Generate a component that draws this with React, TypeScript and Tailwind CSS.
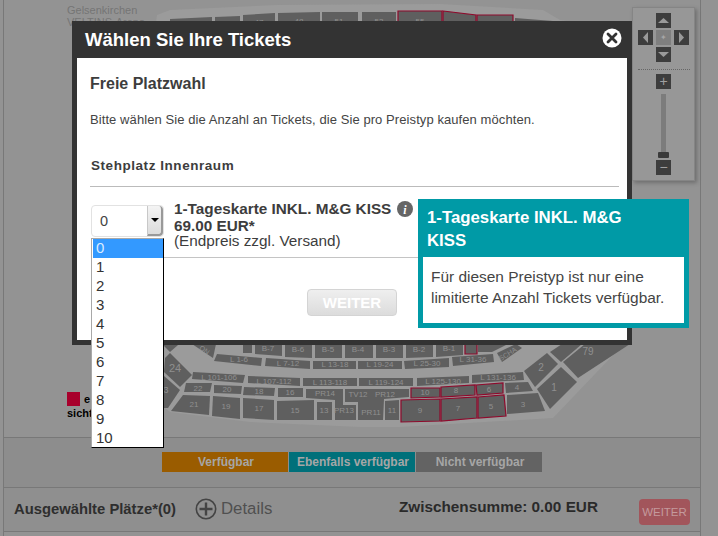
import React from 'react';

type Block = { pts: string; label?: string; x?: number; y?: number; size?: number; rot?: number };

const blocks: Block[] = [
  // top row, cut off by the modal
  { pts: '170,19 212,17 212,30 170,30' },
  { pts: '215,17 240,16 240,30 215,30' },
  { pts: '243,15 275,13 275,30 243,30', label: '47', x: 259, y: 25 },
  { pts: '278,13 320,12 320,30 278,30', label: '48', x: 299, y: 24 },
  { pts: '322,12 358,12 358,30 322,30', label: '51', x: 339, y: 24 },
  { pts: '362,12 396,12 396,30 362,30', label: '53', x: 379, y: 24 },
  { pts: '515,18 553,21 556,30 515,30' },
  // upper rows under the modal
  { pts: '163,345 178,345 170,352' },
  { pts: '192,344 216,344 213,358', label: 'ON', x: 203, y: 352, size: 7, rot: 35 },
  { pts: '243,344 252,344 252,353 243,353' },
  { pts: '255,344 282,344 282,356 255,354', label: 'B-7', x: 268, y: 351 },
  { pts: '285,344 312,344 312,358 285,357', label: 'B-6', x: 298, y: 352 },
  { pts: '315,344 342,344 342,358 315,358', label: 'B-5', x: 328, y: 352 },
  { pts: '345,344 373,344 373,358 345,358', label: 'B-4', x: 358, y: 352 },
  { pts: '376,344 403,344 403,358 376,358', label: 'B-3', x: 389, y: 352 },
  { pts: '406,344 433,344 433,357 406,358', label: 'B-2', x: 419, y: 352 },
  { pts: '436,344 463,344 463,355 436,357', label: 'B-1', x: 449, y: 351 },
  { pts: '478,344 508,344 492,352 478,352' },
  // L rows
  { pts: '217,354 262,358 261,366 214,361', label: 'L 1-6', x: 239, y: 362 },
  { pts: '266,358 310,361 310,369 265,366', label: 'L 7-12', x: 288, y: 366 },
  { pts: '313,361 356,361 356,369 313,369', label: 'L 13-18', x: 335, y: 367 },
  { pts: '358,361 402,361 402,369 358,369', label: 'L 19-24', x: 380, y: 367 },
  { pts: '404,361 449,358 449,367 405,369', label: 'L 25-30', x: 427, y: 366 },
  { pts: '452,357 493,354 494,362 453,366', label: 'L 31-36', x: 473, y: 362 },
  { pts: '497,353 516,344 522,348 502,362', label: 'SCHA', x: 509, y: 356, size: 7, rot: -32 },
  { pts: '193,372 245,375 243,383 192,379', label: 'L 101-106', x: 219, y: 380 },
  { pts: '248,376 300,378 300,386 248,383', label: 'L 107-112', x: 274, y: 384 },
  { pts: '303,378 357,378 357,386 303,386', label: 'L 113-118', x: 330, y: 385 },
  { pts: '359,378 413,378 413,386 359,386', label: 'L 119-124', x: 386, y: 385 },
  { pts: '417,378 469,376 469,383 417,386', label: 'L 125-130', x: 443, y: 384 },
  { pts: '472,375 523,372 524,380 472,383', label: 'L 131-136', x: 498, y: 380 },
  // numbered blocks
  { pts: '165,358 170,353 192,375 180,387 164,372', label: '24', x: 175, y: 372, size: 11 },
  { pts: '164,376 180,390 168,408 164,408', label: '3', x: 166, y: 393, size: 9 },
  { pts: '186,383 212,383 210,392 184,392', label: '22', x: 198, y: 391 },
  { pts: '214,385 242,386 241,394 214,393', label: '20', x: 227, y: 392 },
  { pts: '244,387 275,388 274,396 243,395', label: '18', x: 259, y: 394 },
  { pts: '278,388 303,388 303,397 278,397', label: '16', x: 290, y: 395 },
  { pts: '183,395 210,396 209,415 171,411', label: '21', x: 194, y: 407 },
  { pts: '213,396 240,398 240,419 212,416', label: '19', x: 226, y: 409 },
  { pts: '243,398 274,400 274,420 243,418', label: '17', x: 259, y: 411 },
  { pts: '277,401 314,400 314,420 277,420', label: '15', x: 295, y: 413 },
  { pts: '317,402 332,402 332,420 317,420', label: '13', x: 324, y: 413 },
  { pts: '306,389 343,389 343,405 356,405 356,420 335,420 335,400 306,398', label: 'PR14', x: 325, y: 396 },
  { pts: '345,389 409,389 409,397 384,399 383,420 358,420 358,402 345,402', label: 'TV12', x: 358, y: 397 },
  { pts: '385,401 399,400 399,420 385,420', label: '11', x: 392, y: 413 },
  { pts: '507,395 538,393 545,411 507,414', label: '3', x: 523, y: 407 },
  { pts: '505,383 528,382 533,391 506,393', label: '4', x: 517, y: 390 },
  { pts: '524,371 547,353 558,364 535,387', label: '2', x: 541, y: 371, size: 10 },
  { pts: '537,389 561,367 577,382 550,409', label: '1', x: 554, y: 391, size: 10 },
  { pts: '563,362 585,344 630,344 578,378', label: '79', x: 588, y: 355, size: 10 },
  { pts: '550,352 562,344 582,344 561,362' },
];

const redBlocks: Block[] = [
  { pts: '398,11 442,11 442,30 398,30', label: '55', x: 420, y: 24 },
  { pts: '443,11 476,15 476,30 443,30' },
  { pts: '477,15 513,15 513,30 477,30' },
  { pts: '465,340 477,340 477,354 465,354' },
  { pts: '411,388 440,388 440,397 411,398', label: '10', x: 425, y: 395 },
  { pts: '441,387 475,385 475,395 441,397', label: '8', x: 456, y: 393 },
  { pts: '476,385 503,383 503,393 477,395', label: '6', x: 489, y: 392 },
  { pts: '401,400 440,399 440,421 401,422', label: '9', x: 420, y: 413 },
  { pts: '441,399 477,397 477,418 441,421', label: '7', x: 458, y: 411 },
  { pts: '478,397 504,395 506,416 478,418', label: '5', x: 491, y: 409 },
];

const BlockShape: React.FC<{ block: Block; red?: boolean }> = ({ block, red }) => (
  <g>
    <polygon points={block.pts} fill="#5f5f5f" stroke={red ? '#8e0a2c' : 'none'} strokeWidth={red ? 1.2 : 0} />
    {block.label && (
      <text
        x={block.x}
        y={block.y}
        fontSize={block.size ?? 8}
        fill="#8f8f8f"
        textAnchor="middle"
        fontFamily="'Liberation Sans', sans-serif"
        transform={block.rot ? `rotate(${block.rot} ${block.x} ${block.y})` : undefined}
      >
        {block.label}
      </text>
    )}
  </g>
);

const SeatMap = () => (
  <svg width="696" height="437" viewBox="4 0 696 437" className="block">
    <polygon
      points="157,15 170,10 277,5 440,4 543,10 560,20 630,30 630,344 618,350 553,418 400,427 360,427 250,422 170,412 155,400 155,30"
      fill="#9b9b9b"
    />
    {blocks.map((b, i) => (
      <BlockShape key={i} block={b} />
    ))}
    {redBlocks.map((b, i) => (
      <BlockShape key={i} block={b} red />
    ))}
    <text x="371" y="415" fontSize="8" fill="#8f8f8f" textAnchor="middle" fontFamily="'Liberation Sans', sans-serif">PR11</text>
    <text x="344" y="413" fontSize="8" fill="#8f8f8f" textAnchor="middle" fontFamily="'Liberation Sans', sans-serif">PR13</text>
    <text x="385" y="397" fontSize="8" fill="#8f8f8f" textAnchor="middle" fontFamily="'Liberation Sans', sans-serif">PR12</text>
  </svg>
);

const ArrowButton: React.FC<{ dir: 'up' | 'down' | 'left' | 'right' }> = ({ dir }) => {
  const pts = {
    up: '2,10 13,10 7.5,5',
    down: '2,5 13,5 7.5,10',
    left: '10,2 10,13 5,7.5',
    right: '5,2 5,13 10,7.5',
  }[dir];
  return (
    <div className="w-[15px] h-[15px] bg-[#3d3d3d]">
      <svg width="15" height="15" viewBox="0 0 15 15">
        <polygon points={pts} fill="#9a9a9a" />
      </svg>
    </div>
  );
};

const ZoomControl = () => (
  <div className="absolute left-[632px] top-[7px] w-[63px] h-[174px] bg-[#979797] border border-[#858585] shadow-[2px_2px_4px_rgba(0,0,0,0.25)] flex flex-col items-center pt-[5px]">
    <div className="flex flex-col items-center gap-[2px]">
      <ArrowButton dir="up" />
      <div className="flex gap-[3px]">
        <ArrowButton dir="left" />
        <div className="w-[15px] h-[15px] bg-[#7f7f7f] flex items-center justify-center text-[#a5a5a5] text-[8px] leading-none">
          ✦
        </div>
        <ArrowButton dir="right" />
      </div>
      <ArrowButton dir="down" />
    </div>
    <div className="w-[52px] border-t border-dotted border-[#666] mt-[7px] mb-[4px]" />
    <div className="w-[15px] h-[15px] bg-[#3d3d3d] text-[#a0a0a0] text-[14px] leading-[15px] text-center">+</div>
    <div className="w-[5px] h-[58px] bg-[#7c7c7c] mt-[5px]" />
    <div className="w-[11px] h-[6px] bg-[#3a3a3a] rounded-[1px]" />
    <div className="w-[15px] h-[15px] mt-[2px] bg-[#3d3d3d] text-[#a0a0a0] text-[14px] leading-[14px] text-center">−</div>
  </div>
);

const options = ['0', '1', '2', '3', '4', '5', '6', '7', '8', '9', '10'];

const QuantitySelect = () => (
  <div className="relative w-[73px] h-[32px] shrink-0 ml-[1px]">
    <div className="w-full h-full border border-[#e2e2e2] rounded-[4px] flex bg-white">
      <span className="flex-1 pl-[8px] text-[14.5px] leading-[30px] text-[#444]">0</span>
      <div className="w-[16px] bg-gradient-to-b from-[#f4f4f4] to-[#dcdcdc] border-l border-[#c8c8c8] border-r-2 border-b-2 border-r-[#999] border-b-[#999] rounded-r-[4px] flex items-center justify-center">
        <div className="w-0 h-0 border-x-[4px] border-x-transparent border-t-[4px] border-t-black" />
      </div>
    </div>
    <div className="absolute left-0 top-[33px] w-[73px] h-[210px] bg-white border-l border-t border-[#a8a8a8] border-r border-b border-r-black border-b-black pl-[1px] z-20">
      {options.map((o, i) => (
        <div
          key={o}
          className={`h-[19px] leading-[18px] text-[15px] pl-[3px] ${i === 0 ? 'bg-[#3399ff] text-[#dcecff]' : 'text-[#333]'}`}
        >
          {o}
        </div>
      ))}
    </div>
  </div>
);

const Modal = () => (
  <div className="absolute left-[72px] top-[21px] w-[560px] h-[324px] bg-[#333] px-[5px] pb-[5px] flex flex-col">
    <div className="h-[37px] flex items-center justify-between pl-[8px] pr-[5px] text-white">
      <span className="text-[18.5px] font-bold">Wählen Sie Ihre Tickets</span>
      <svg width="20" height="20" viewBox="0 0 20 20" className="mt-[-3px]">
        <circle cx="10" cy="10" r="9.5" fill="#fff" />
        <path d="M6 6 L14 14 M14 6 L6 14" stroke="#333" strokeWidth="2.8" strokeLinecap="round" />
      </svg>
    </div>
    <div className="flex-1 bg-white pt-[17px] pl-[13px] pr-[8px] flex flex-col relative">
      <h2 className="text-[16px] leading-[18px] font-bold text-[#3d3d3d]">Freie Platzwahl</h2>
      <p className="mt-[19px] text-[13px] leading-[16px] tracking-[0.08px] text-[#444]">
        Bitte wählen Sie die Anzahl an Tickets, die Sie pro Preistyp kaufen möchten.
      </p>
      <h3 className="mt-[30px] ml-[1px] text-[13.5px] leading-[16px] font-bold tracking-[0.55px] text-[#3d3d3d]">
        Stehplatz Innenraum
      </h3>
      <div className="mt-[12px] border-t border-[#bbb]" />
      <div className="mt-[18px] flex gap-[10px] h-[52px]">
        <QuantitySelect />
        <div className="text-[15.3px] leading-[16px] text-[#3d3d3d] mt-[-4px]">
          <div className="flex items-center gap-[6px] h-[16px] font-bold">
            1-Tageskarte INKL. M&amp;G KISS
            <svg width="16" height="16" viewBox="0 0 16 16">
              <circle cx="8" cy="8" r="8" fill="#666" />
              <text x="8" y="12.5" fontSize="12" fontWeight="700" fontStyle="italic" fill="#fff" textAnchor="middle" fontFamily="'Liberation Serif', serif">i</text>
            </svg>
          </div>
          <div className="font-bold mt-[1px]">69.00 EUR*</div>
          <div className="leading-[14px]">(Endpreis zzgl. Versand)</div>
        </div>
      </div>
      <div className="ml-[73px] border-t border-[#c4c4c4]" />
      <button className="mt-[31px] ml-[217px] w-[90px] h-[27px] rounded-[4px] border border-[#d4d4d4] bg-gradient-to-b from-[#efefef] to-[#dcdcdc] text-white font-bold text-[15px] leading-[24px] text-center">
        WEITER
      </button>
    </div>
  </div>
);

const Tooltip = () => (
  <div className="absolute left-[418px] top-[199px] w-[271px] h-[129px] bg-[#009aa6] p-[5px] pt-[7px] flex flex-col z-10">
    <div className="h-[51px] pl-[4px] text-white font-bold text-[16.8px] leading-[23px]">
      1-Tageskarte INKL. M&amp;G<br />KISS
    </div>
    <div className="flex-1 bg-white pl-[8px] pt-[9px] text-[15.45px] leading-[21px] text-[#444]">
      Für diesen Preistyp ist nur eine<br />limitierte Anzahl Tickets verfügbar.
    </div>
  </div>
);

export default function App() {
  return (
    <div className="relative w-[718px] h-[536px] overflow-hidden bg-[#939393] font-['Liberation_Sans',Arial,sans-serif]">
      <div className="ml-[3px] w-[698px] h-full border-x border-[#787878] flex flex-col">
        <div className="relative h-[438px] bg-[#939393] border-b border-[#787878] shrink-0">
          <SeatMap />
        </div>
        <div className="h-[50px] bg-[#8d8d8d] border-b border-[#787878] flex pl-[158px] pt-[14px] gap-[1px] shrink-0">
          <div className="w-[126px] h-[20px] pl-[2px] bg-[#9a5c00] text-[#a6a6a6] text-[12px] font-bold text-center leading-[20px]">Verfügbar</div>
          <div className="w-[126px] h-[20px] pl-[2px] bg-[#00707a] text-[#a6a6a6] text-[12px] font-bold text-center leading-[20px]">Ebenfalls verfügbar</div>
          <div className="w-[126px] h-[20px] pl-[2px] bg-[#636363] text-[#a6a6a6] text-[12px] font-bold text-center leading-[20px]">Nicht verfügbar</div>
        </div>
        <div className="h-[44px] bg-[#8f8f8f] border-b border-[#787878] flex items-center pl-[10px] pr-[10px] shrink-0">
          <span className="w-[181px] text-[14.8px] font-bold text-[#2e2e2e]">Ausgewählte Plätze*(0)</span>
          <svg width="22" height="22" viewBox="0 0 22 22" className="mt-[-1px]">
            <circle cx="11" cy="11" r="9.7" fill="none" stroke="#444" strokeWidth="1.6" />
            <path d="M11 4.5 V17.5 M4.5 11 H17.5" stroke="#444" strokeWidth="2.4" />
          </svg>
          <span className="ml-[4px] w-[52px] text-[16.8px] text-[#505050] mt-[-2px]">Details</span>
          <span className="ml-[126px] text-[15.3px] font-bold text-[#2a2a2a] mt-[-4px]">Zwischensumme: 0.00 EUR</span>
          <div className="ml-auto w-[51px] h-[26px] rounded-[4px] bg-[#a2555b] text-[#c49a9d] text-[11.5px] leading-[26px] text-center mt-[4px]">WEITER</div>
        </div>
      </div>

      <div className="absolute left-[67px] top-[4px] text-[11px] leading-[12px] text-[#757575]">
        Gelsenkirchen<br />VELTINS-Arena
      </div>
      <div className="absolute left-[67px] top-[392px] text-[11px] font-bold leading-[14px] text-black">
        <div className="flex items-center gap-[4px]">
          <div className="w-[13px] h-[14px] bg-[#a8002c]" />
          <span>e</span>
        </div>
        <div>sicht</div>
      </div>
      <ZoomControl />
      <Modal />
      <Tooltip />
    </div>
  );
}
